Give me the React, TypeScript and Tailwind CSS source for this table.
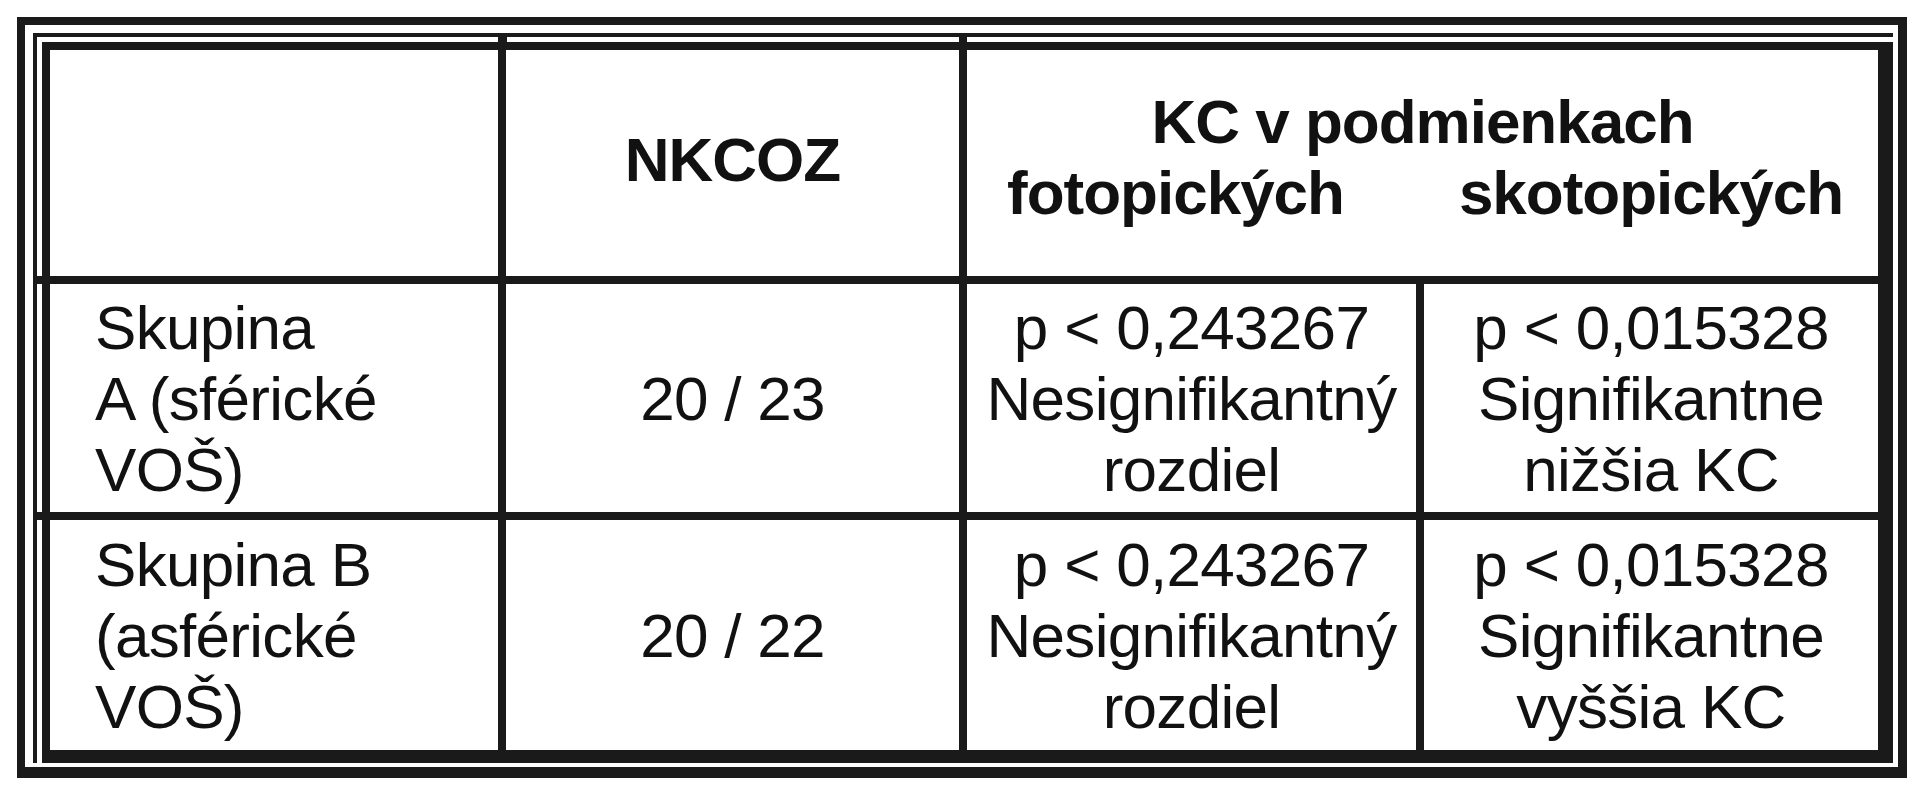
const font = { fontFamily: '"Liberation Sans", Arial, sans-serif' };

function Cell({ children, className = '' }: { children: React.ReactNode; className?: string }) {
  return <div className={`bg-white flex flex-col justify-center ${className}`}>{children}</div>;
}

export default function App() {
  return (
    <div className="w-[1923px] h-[800px] bg-white pt-[17px] pl-[17px] text-[#111]" style={font}>
      {/* outer frame */}
      <div className="w-[1890px] h-[761px] border-t-[8px] border-l-[8px] border-r-[9px] border-b-[11px] border-[#1a1a1a] pt-[8px] pl-[8px] pr-[5px] pb-[4px]">
        {/* thin line box */}
        <div className="relative w-full h-full border-t-[4px] border-l-[4px] border-[#1a1a1a] pt-[5px] pl-[5px]">
          {/* divider stubs crossing the white gap */}
          <div className="absolute top-0 left-[461px] w-[9px] h-[5px] bg-[#1a1a1a]" />
          <div className="absolute top-0 left-[922px] w-[8px] h-[5px] bg-[#1a1a1a]" />
          <div className="absolute left-0 top-[239px] w-[5px] h-[8px] bg-[#1a1a1a]" />
          <div className="absolute left-0 top-[475px] w-[5px] h-[8px] bg-[#1a1a1a]" />

          {/* thick line box */}
          <div className="w-full h-full border-t-[8px] border-l-[8px] border-r-[15px] border-b-[13px] border-[#1a1a1a] bg-[#1a1a1a]">
            <div className="grid grid-cols-[448px_453px_449px_1fr] grid-rows-[226px_228px_1fr] gap-[8px] h-full text-[62px] leading-[71px] tracking-[-0.7px]">
              {/* header */}
              <Cell>{''}</Cell>
              <Cell className="items-center pb-[8px] font-bold tracking-[-1px]">NKCOZ</Cell>
              <Cell className="col-span-2 pb-[12px] font-bold tracking-[-1px]">
                <div className="text-center">KC v podmienkach</div>
                <div className="flex">
                  <div className="w-[457px] text-center pr-[40px]">fotopických</div>
                  <div className="flex-1 text-center">skotopických</div>
                </div>
              </Cell>

              {/* row A */}
              <Cell className="pl-[45px]">
                <div>Skupina</div>
                <div>A (sférické</div>
                <div>VOŠ)</div>
              </Cell>
              <Cell className="items-center">20 / 23</Cell>
              <Cell className="items-center text-center">
                <div>p &lt; 0,243267</div>
                <div>Nesignifikantný</div>
                <div>rozdiel</div>
              </Cell>
              <Cell className="items-center text-center">
                <div>p &lt; 0,015328</div>
                <div>Signifikantne</div>
                <div>nižšia KC</div>
              </Cell>

              {/* row B */}
              <Cell className="pl-[45px]">
                <div>Skupina B</div>
                <div>(asférické</div>
                <div>VOŠ)</div>
              </Cell>
              <Cell className="items-center">20 / 22</Cell>
              <Cell className="items-center text-center">
                <div>p &lt; 0,243267</div>
                <div>Nesignifikantný</div>
                <div>rozdiel</div>
              </Cell>
              <Cell className="items-center text-center">
                <div>p &lt; 0,015328</div>
                <div>Signifikantne</div>
                <div>vyššia KC</div>
              </Cell>
            </div>
          </div>
        </div>
      </div>
    </div>
  );
}
